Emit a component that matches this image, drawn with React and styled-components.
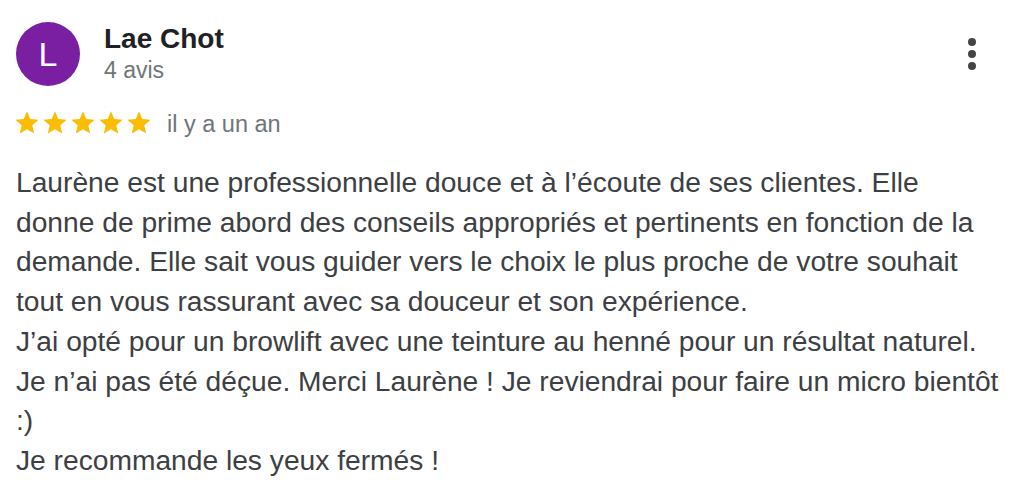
import React from "react";
import styled, { createGlobalStyle } from "styled-components";

const GlobalStyle = createGlobalStyle`
  body {
    margin: 0;
    background: #fff;
    font-family: "Liberation Sans", Arial, sans-serif;
  }
`;

const review = {
  initial: "L",
  name: "Lae Chot",
  count: "4 avis",
  rating: 5,
  date: "il y a un an",
  lines: [
    "Laurène est une professionnelle douce et à l’écoute de ses clientes. Elle donne de prime abord des conseils appropriés et pertinents en fonction de la demande. Elle sait vous guider vers le choix le plus proche de votre souhait tout en vous rassurant avec sa douceur et son expérience.",
    "J’ai opté pour un browlift avec une teinture au henné pour un résultat naturel.",
    "Je n’ai pas été déçue. Merci Laurène ! Je reviendrai pour faire un micro bientôt :)",
    "Je recommande les yeux fermés !",
  ],
};

const Star = () => (
  <svg width="28" height="28" viewBox="0 0 24 24">
    <path
      fill="#fbbc04"
      d="M12 17.27L18.18 21l-1.64-7.03L22 9.24l-7.19-.61L12 2 9.19 8.63 2 9.24l5.46 4.73L5.82 21z"
    />
  </svg>
);

const App = () => {
  return (
    <>
      <GlobalStyle />
      <Card>
        <Header>
          <Avatar>{review.initial}</Avatar>
          <Author>
            <Name>{review.name}</Name>
            <Count>{review.count}</Count>
          </Author>
          <MoreButton aria-label="Plus">
            <Dot />
            <Dot />
            <Dot />
          </MoreButton>
        </Header>
        <RatingRow>
          <Stars>
            {Array.from({ length: review.rating }).map((_, i) => (
              <Star key={i} />
            ))}
          </Stars>
          <Date>{review.date}</Date>
        </RatingRow>
        <Body>
          {review.lines.map((line, i) => (
            <p key={i}>{line}</p>
          ))}
        </Body>
      </Card>
    </>
  );
};

export default App;

const Card = styled.div`
  padding: 22px 0 0 16px;
  width: 986px;
`;

const Header = styled.div`
  display: flex;
  align-items: flex-start;
`;

const Avatar = styled.div`
  width: 64px;
  height: 64px;
  border-radius: 50%;
  background: #7b1fa2;
  color: #fff;
  font-size: 34px;
  display: flex;
  align-items: center;
  justify-content: center;
  flex-shrink: 0;
`;

const Author = styled.div`
  display: flex;
  flex-direction: column;
  margin-left: 24px;
  flex: 1;
`;

const Name = styled.div`
  font-size: 28px;
  font-weight: bold;
  color: #202124;
  line-height: 34px;
`;

const Count = styled.div`
  font-size: 23px;
  color: #70757a;
  line-height: 28px;
`;

const MoreButton = styled.div`
  display: flex;
  flex-direction: column;
  gap: 4px;
  margin-top: 16px;
  margin-right: 26px;
`;

const Dot = styled.span`
  width: 8px;
  height: 8px;
  border-radius: 50%;
  background: #444;
`;

const RatingRow = styled.div`
  display: flex;
  align-items: center;
  margin-top: 23px;
  height: 28px;
`;

const Stars = styled.div`
  display: flex;
  margin-left: -3px;
`;

const Date = styled.span`
  margin-left: 14px;
  padding-top: 2px;
  font-size: 23.5px;
  color: #70757a;
`;

const Body = styled.div`
  margin-top: 26px;
  font-size: 28.2px;
  line-height: 39.7px;
  color: #3c4043;

  p {
    margin: 0;
  }
`;
